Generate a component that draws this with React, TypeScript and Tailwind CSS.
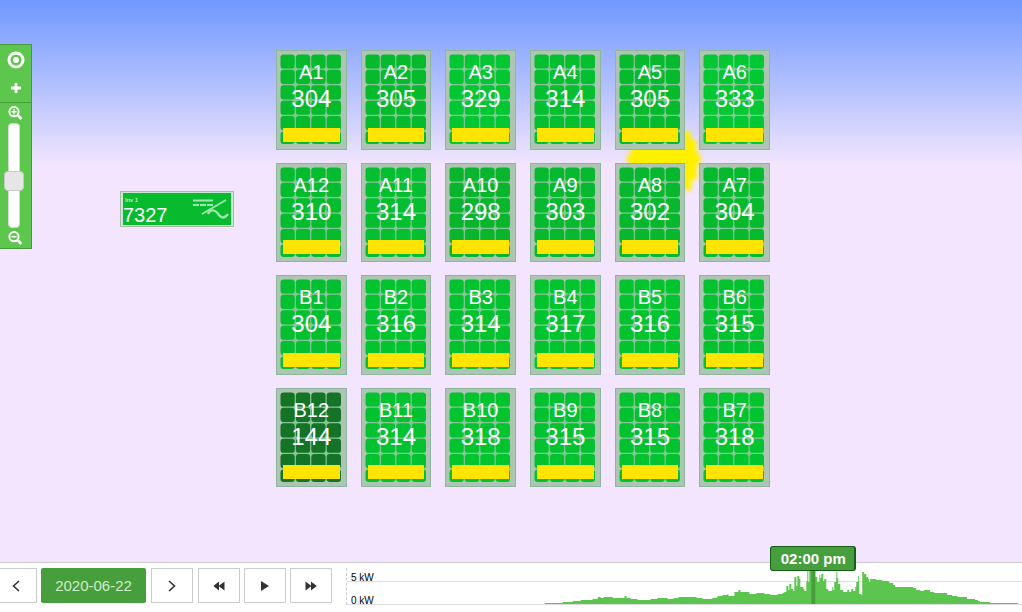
import { useState } from "react";

type Module = { id: string; watts: number; color: string };

const modules: Module[] = [
  { id: "A1", watts: 304, color: "#06ba2e" },
  { id: "A2", watts: 305, color: "#06ba2e" },
  { id: "A3", watts: 329, color: "#02c632" },
  { id: "A4", watts: 314, color: "#04bf2f" },
  { id: "A5", watts: 305, color: "#06ba2e" },
  { id: "A6", watts: 333, color: "#02c833" },
  { id: "A12", watts: 310, color: "#05bc2e" },
  { id: "A11", watts: 314, color: "#04bf2f" },
  { id: "A10", watts: 298, color: "#08b52d" },
  { id: "A9", watts: 303, color: "#07b92e" },
  { id: "A8", watts: 302, color: "#07b82e" },
  { id: "A7", watts: 304, color: "#06ba2e" },
  { id: "B1", watts: 304, color: "#04bf2f" },
  { id: "B2", watts: 316, color: "#02c42f" },
  { id: "B3", watts: 314, color: "#02c22f" },
  { id: "B4", watts: 317, color: "#02c42f" },
  { id: "B5", watts: 316, color: "#02c42f" },
  { id: "B6", watts: 315, color: "#02c32f" },
  { id: "B12", watts: 144, color: "#137326" },
  { id: "B11", watts: 314, color: "#02c22f" },
  { id: "B10", watts: 318, color: "#02c42f" },
  { id: "B9", watts: 315, color: "#02c32f" },
  { id: "B8", watts: 315, color: "#02c32f" },
  { id: "B7", watts: 318, color: "#02c42f" },
];

// [minute slot, power] pairs for the day chart
const power: [number, number][] = [
  [198, 1], [216, 2], [226, 3], [234, 4], [246, 5], [251, 7], [254, 6], [257, 7], [266, 6], [276, 6], [278, 8], [280, 6],
  [284, 5], [291, 4], [304, 5], [311, 6], [321, 5], [327, 6], [332, 7], [346, 7], [350, 6], [356, 5], [366, 6], [371, 8],
  [376, 9], [381, 10], [382, 8], [386, 8], [388, 12], [392, 14], [394, 12], [401, 12], [403, 10], [410, 11], [418, 10],
  [424, 9], [431, 10], [436, 11], [438, 12], [440, 18], [442, 14], [443, 20], [445, 15], [447, 13], [448, 27], [450, 18],
  [451, 28], [453, 25], [454, 17], [457, 15], [458, 13], [460, 23], [461, 33], [462, 22], [463, 33], [469, 27], [471, 22],
  [473, 29], [474, 26], [475, 30], [477, 23], [478, 25], [480, 15], [482, 13], [486, 17], [487, 14], [488, 22], [490, 32],
  [491, 26], [492, 20], [494, 14], [497, 12], [501, 14], [503, 12], [505, 15], [507, 13], [509, 17], [510, 22], [512, 28],
  [513, 10], [515, 9], [516, 32], [518, 30], [520, 27], [522, 25], [523, 22], [524, 25], [530, 24], [536, 23], [543, 21],
  [547, 19], [549, 17], [567, 16], [570, 14], [574, 13], [578, 14], [584, 12], [588, 11], [601, 9], [606, 8], [611, 7],
  [621, 5], [629, 4], [632, 3], [634, 2], [644, 1], [672, 0],
];

// each value holds until the next slot starts
function areaPath(points: [number, number][]) {
  let d = `M${points[0][0]} 36`;
  points.forEach(([x, h], i) => {
    const next = points[i + 1] ? points[i + 1][0] : x;
    d += `V${36 - h}H${next}`;
  });
  return d + "V36Z";
}

function SolarPanel({ id, watts, color }: Module) {
  const cells = [];
  for (let row = 0; row < 6; row++) {
    for (let col = 0; col < 4; col++) {
      cells.push(
        <rect
          key={`${row}-${col}`}
          x={4.5 + col * 15.5}
          y={4.4 + row * 15.5}
          width={14.3}
          height={row === 5 ? 12.6 : 14.3}
          rx={3.2}
          fill={color}
        />
      );
    }
  }
  return (
    <div className="relative border border-[#8eb69c] bg-[#afc5b4]">
      <svg viewBox="0 0 71 100" preserveAspectRatio="none" className="absolute -inset-px h-[calc(100%+2px)] w-[calc(100%+2px)]">
        <rect x="6" y="6" width="59" height="87" fill="#86c696" />
        {cells}
      </svg>
      <div className="relative pt-[9px] text-center leading-[25px] text-white">
        <div className="text-[20px]">{id}</div>
        <div className="pt-px text-[24px]">{watts}</div>
      </div>
      <div className="absolute inset-x-1.5 bottom-[7px] h-3.5 bg-[#ffe400]" />
    </div>
  );
}

function Inverter() {
  return (
    <div className="mt-[191px] ml-[88px] h-9 w-[114px] shrink-0 border border-[#a9b9ac] bg-[#c9e8d2] px-0.5 py-px">
      <div className="relative h-full overflow-hidden bg-[#07ba2e] text-white">
        <div className="pt-[3px] pl-0.5 text-[6px] leading-[8px]">Inv 1</div>
        <div className="pt-px text-[20px] leading-5">7327</div>
        <svg viewBox="0 0 36 24" className="absolute top-1 right-0.5 h-6 w-9" fill="none" stroke="#9ee6ae" strokeWidth="2">
          <path d="M0 3.5H20M0 8H6M7 8H13M14 8H20M9 17L33 3" />
          <path d="M15 17C17 12 22 12 26 18C29 22 32 21 35 17" strokeWidth="2.4" />
        </svg>
      </div>
    </div>
  );
}

function ZoomIcon({ plus }: { plus?: boolean }) {
  return (
    <svg viewBox="0 0 15 14" className="block h-3.5 w-[15px]" fill="none" stroke="white">
      <circle cx="6" cy="5.7" r="4.6" strokeWidth="2" />
      <path d="M9.4 9L13.4 13" strokeWidth="2.8" />
      <path d="M3.5 5.7H8.5" strokeWidth="1.5" />
      {plus && <path d="M6 3.2V8.2" strokeWidth="1.5" />}
    </svg>
  );
}

function Toolbar() {
  const [zoom, setZoom] = useState(43);

  return (
    <div className="mt-11 w-8 shrink-0 border border-l-0 border-[#459a3c] bg-[#5cc64d]">
      <div className="flex h-[58px] flex-col items-center border-b border-[#459a3c] pt-1.5">
        <button aria-label="Center view">
          <svg viewBox="0 0 18 18" className="block size-[18px]">
            <circle cx="9" cy="9" r="7" fill="none" stroke="white" strokeWidth="3" />
            <circle cx="9" cy="9" r="3" fill="white" />
          </svg>
        </button>
        <button aria-label="Add" className="mt-3.5">
          <svg viewBox="0 0 10 10" className="block size-2.5" stroke="white" strokeWidth="2.8">
            <path d="M0 5H10M5 0V10" />
          </svg>
        </button>
      </div>
      <div className="flex flex-col items-center gap-[3px] py-[3px]">
        <button aria-label="Zoom in">
          <ZoomIcon plus />
        </button>
        <input
          type="range"
          aria-label="Zoom"
          min={0}
          max={100}
          value={zoom}
          onChange={(e) => setZoom(Number(e.target.value))}
          className="mr-[3px] h-[105px] w-5 appearance-none bg-transparent [direction:rtl] [writing-mode:vertical-lr] [&::-webkit-slider-runnable-track]:w-3 [&::-webkit-slider-runnable-track]:rounded [&::-webkit-slider-runnable-track]:border [&::-webkit-slider-runnable-track]:border-[#cfdccb] [&::-webkit-slider-runnable-track]:bg-white [&::-webkit-slider-thumb]:-ml-[5px] [&::-webkit-slider-thumb]:h-5 [&::-webkit-slider-thumb]:w-5 [&::-webkit-slider-thumb]:appearance-none [&::-webkit-slider-thumb]:rounded [&::-webkit-slider-thumb]:border [&::-webkit-slider-thumb]:border-[#c9c9c9] [&::-webkit-slider-thumb]:bg-[#e6e6e6]"
        />
        <button aria-label="Zoom out">
          <ZoomIcon />
        </button>
      </div>
    </div>
  );
}

function Sun() {
  return (
    <svg viewBox="0 0 80 80" className="absolute top-[120px] left-[624px] size-20 blur-[2px]" fill="#fff000">
      <circle cx="40" cy="40" r="34" />
      <path d="M40 1L46 7L55 4L58 11L66 11L67 18L73 22L72 30L78 39L72 48L74 57L67 62L68 71L58 69L50 77L40 73L30 77L22 69L12 71L13 62L6 57L8 48L2 39L8 30L7 22L13 18L14 11L22 11L25 4L34 7Z" />
    </svg>
  );
}

const navButton = "flex h-[35px] w-[42px] items-center justify-center border border-[#ccc] bg-white text-[#333]";

export default function App() {
  return (
    <div className="flex min-h-screen flex-col bg-white font-['Liberation_Sans',Arial,sans-serif]">
      <main className="relative flex flex-1 items-start bg-[#f2e5fd] bg-[linear-gradient(#6f98ff,#f2e5fd_165px)]">
        <Sun />
        <Toolbar />
        <Inverter />
        <div className="relative mt-[50px] ml-[42px] grid h-[437px] w-[494px] shrink-0 grid-cols-6 grid-rows-4 gap-x-3.5 gap-y-[13px]">
          {modules.map((m) => (
            <SolarPanel key={m.id} {...m} />
          ))}
        </div>
      </main>

      <footer className="flex h-[50px] border-t border-[#ccc] pt-[5px]">
        <div className="flex shrink-0">
          <button aria-label="Previous day" className="flex h-[35px] w-[37px] items-center justify-center border border-l-0 border-[#ccc] pr-1 text-[#333]">
            <svg viewBox="0 0 8 12" className="h-3 w-2" fill="none" stroke="currentColor" strokeWidth="1.6">
              <path d="M7 1L1.5 6L7 11" />
            </svg>
          </button>
          <button className="ml-1 h-[35px] w-[105px] rounded-[2px] bg-[#479e3c] pt-0.5 text-[15px] text-[#d0ecca]">2020-06-22</button>
          <button aria-label="Next day" className={`${navButton} ml-[5px]`}>
            <svg viewBox="0 0 8 12" className="h-3 w-2" fill="none" stroke="currentColor" strokeWidth="1.6">
              <path d="M1 1L6.5 6L1 11" />
            </svg>
          </button>
          <button aria-label="Rewind" className={`${navButton} ml-[5px]`}>
            <svg viewBox="0 0 12 10" className="h-2.5 w-3" fill="currentColor">
              <path d="M6 .5V9.5L.3 5ZM11.5 .5V9.5L5.5 5Z" />
            </svg>
          </button>
          <button aria-label="Play" className={`${navButton} ml-1`}>
            <svg viewBox="0 0 8 10" className="h-2.5 w-2" fill="currentColor">
              <path d="M0 0L8 5L0 10Z" />
            </svg>
          </button>
          <button aria-label="Fast forward" className={`${navButton} ml-1`}>
            <svg viewBox="0 0 12 10" className="h-2.5 w-3" fill="currentColor">
              <path d="M.5 .5V9.5L6.5 5ZM6 .5V9.5L11.8 5Z" />
            </svg>
          </button>
        </div>

        <div className="relative ml-3.5 h-[37px] flex-1 border-l border-dashed border-[#ccc]">
          <svg viewBox="0 0 676 37" preserveAspectRatio="none" className="absolute inset-0 h-full w-full">
            <path d="M0 13.5H676M0 36.5H676" stroke="#ddd" />
            <path d={areaPath(power)} fill="#5bc54f" />
            <rect x="465" y="2" width="4" height="34" fill="#479e3c" />
          </svg>
          <div className="absolute top-1 left-1 text-[10px] leading-3 text-black">5 kW</div>
          <div className="absolute top-[27px] left-1 text-[10px] leading-3 text-black">0 kW</div>
          <div className="absolute -top-[22px] left-[69%] flex h-[25px] w-[86px] -translate-x-1/2 items-center justify-center rounded-[3px] border border-r-2 border-[#145f18] bg-[#479e3c] pt-0.5 pl-0.5 text-[15px] font-bold text-white">
            02:00 pm
          </div>
        </div>
      </footer>
    </div>
  );
}
